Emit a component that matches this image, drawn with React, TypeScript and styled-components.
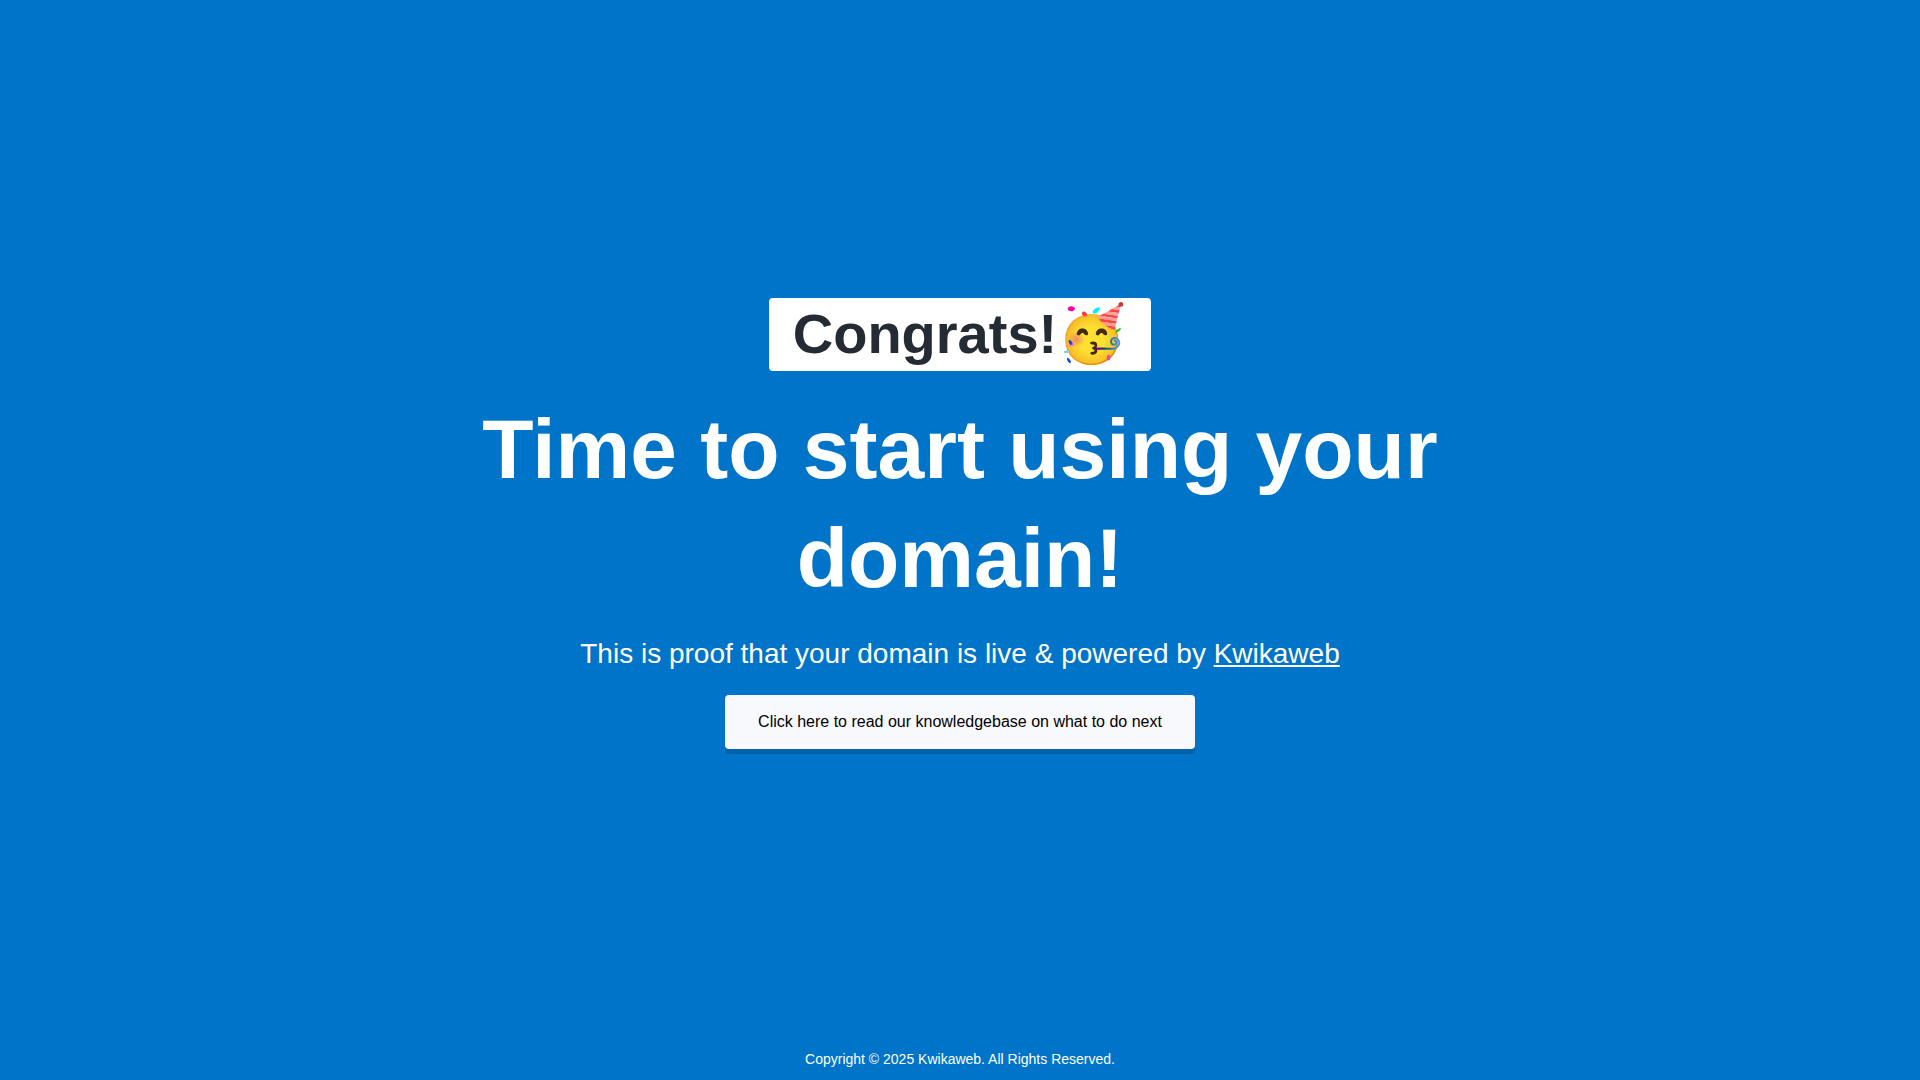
import React from "react";
import styled, { createGlobalStyle } from "styled-components";

const Global = createGlobalStyle`
  *, *::before, *::after { box-sizing: border-box; }
  body { margin: 0; background: #0074c8; color: #fff; font-family: "Liberation Sans", Arial, sans-serif; font-size: 16px; line-height: 1.5; }
  h1, p { margin: 0; }
`;

const Page = styled.div`
  display: flex;
  flex-direction: column;
  min-height: 100vh;
  text-align: center;
`;

const Main = styled.main`
  flex: 1;
  display: flex;
  flex-direction: column;
  align-items: center;
  justify-content: center;
  padding-top: 8px;
`;

const Badge = styled.p`
  padding: 0 24px 2px;
  border-radius: 4px;
  background: #fff;
  color: #242b33;
  font-size: 56px;
  font-weight: 700;
  line-height: 71px;
`;

const Title = styled.h1`
  max-width: 1080px;
  margin: 24px 0 20px;
  font-size: 84px;
  line-height: 109px;
`;

const Lead = styled.p`
  font-size: 28px;
  line-height: 42px;
`;

const Link = styled.a`
  color: inherit;
`;

const Button = styled.a`
  margin-top: 20px;
  padding: 15px 33px;
  border-radius: 4px;
  background: #f8f9fc;
  box-shadow: 0 5px 0 rgba(0, 0, 0, 0.15);
  color: #000;
  text-decoration: none;
`;

const Footer = styled.footer`
  padding: 10px;
  font-size: 14px;
`;

export default function App() {
  return (
    <Page>
      <Global />
      <Main>
        <Badge>Congrats!🥳</Badge>
        <Title>Time to start using your domain!</Title>
        <Lead>This is proof that your domain is live &amp; powered by <Link href="#">Kwikaweb</Link></Lead>
        <Button href="#">Click here to read our knowledgebase on what to do next</Button>
      </Main>
      <Footer>Copyright © 2025 Kwikaweb. All Rights Reserved.</Footer>
    </Page>
  );
}
